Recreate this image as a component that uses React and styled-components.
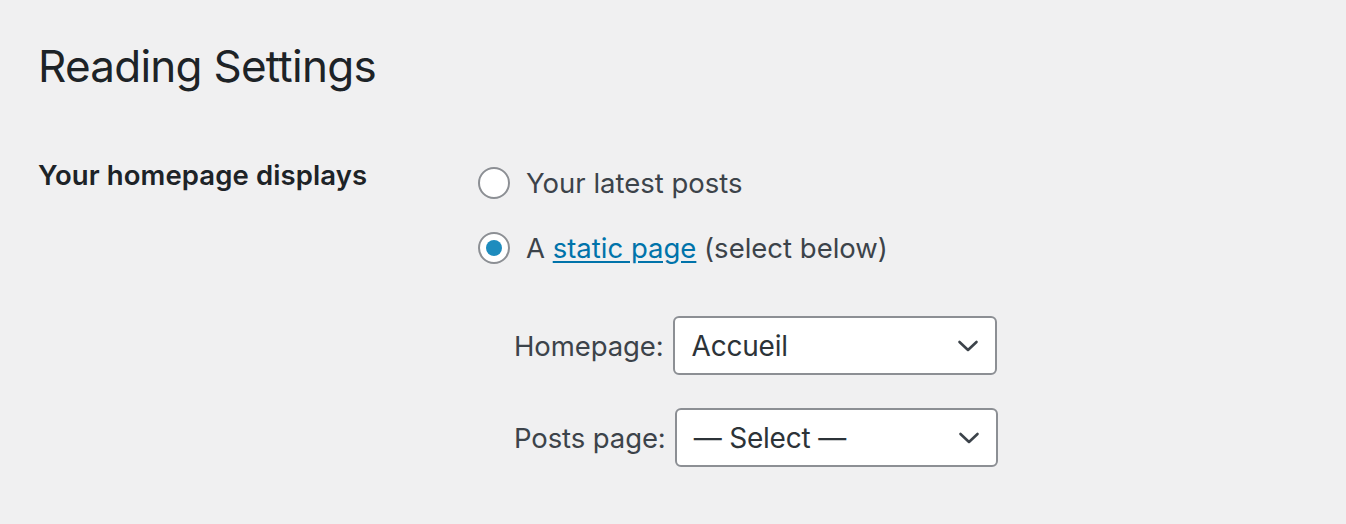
import React from 'react'
import styled, { createGlobalStyle } from 'styled-components'

const GlobalStyle = createGlobalStyle`
  body {
    margin: 0;
    background: #f0f0f1;
    font-family: Inter, "Noto Sans", sans-serif;
    color: #3c434a;
  }
`

const Page = styled.div`
  padding: 36px 38px 0 38px;
`

const Title = styled.h1`
  margin: 0 0 62px 0;
  font-size: 44px;
  font-weight: 400;
  line-height: 60px;
  color: #1d2327;
  letter-spacing: -0.75px;
`

const FormRow = styled.div`
  display: grid;
  grid-template-columns: 440px 1fr;
`

const RowLabel = styled.div`
  font-size: 27.5px;
  font-weight: 600;
  color: #1d2327;
  line-height: 34px;
  letter-spacing: 0.1px;
`

const Options = styled.div`
  display: flex;
  flex-direction: column;
  gap: 31px;
  margin-top: 8px;
`

const Option = styled.label`
  display: flex;
  align-items: center;
  gap: 16px;
  font-size: 27.5px;
  line-height: 34px;
  color: #3c434a;
  letter-spacing: 0;
`

const RadioCircle = styled.span`
  width: 28px;
  height: 28px;
  border: 2px solid #8c8f94;
  border-radius: 50%;
  background: #fff;
  display: flex;
  align-items: center;
  justify-content: center;
  flex-shrink: 0;

  &::after {
    content: "";
    width: 16px;
    height: 16px;
    border-radius: 50%;
    background: ${p => (p.$checked ? '#1e8cbe' : 'transparent')};
  }
`

const Link = styled.a`
  color: #0073aa;
  text-decoration: underline;
  text-underline-offset: 3px;
`

const SubFields = styled.div`
  display: flex;
  flex-direction: column;
  gap: 33px;
  padding-left: 36px;
  margin-top: 51px;
`

const Field = styled.div`
  display: flex;
  align-items: center;
  gap: 9px;
`

const FieldLabel = styled.span`
  font-size: 27.5px;
  color: #3c434a;
  letter-spacing: -0.1px;
`

const Select = styled.div`
  box-sizing: border-box;
  width: ${p => p.$width}px;
  height: 59px;
  border: 2px solid #8c8f94;
  border-radius: 6px;
  background: #fff;
  display: flex;
  align-items: center;
  justify-content: space-between;
  padding: 0 16px 0 17px;
  font-size: 28px;
  color: #2c3338;
  letter-spacing: -0.2px;
`

const Chevron = () => (
  <svg width="22" height="14" viewBox="0 0 22 14" fill="none">
    <path d="M2.5 3L11 11L19.5 3" stroke="#3c434a" strokeWidth="2.6" strokeLinecap="round" strokeLinejoin="round" />
  </svg>
)

export default function App() {
  return (
    <>
      <GlobalStyle />
      <Page>
        <Title>Reading Settings</Title>
        <FormRow>
          <RowLabel>Your homepage displays</RowLabel>
          <div>
            <Options>
              <Option>
                <RadioCircle />
                Your latest posts
              </Option>
              <Option>
                <RadioCircle $checked />
                <span>
                  A <Link>static page</Link> (select below)
                </span>
              </Option>
            </Options>
            <SubFields>
              <Field>
                <FieldLabel>Homepage:</FieldLabel>
                <Select $width={324}>
                  Accueil
                  <Chevron />
                </Select>
              </Field>
              <Field>
                <FieldLabel>Posts page:</FieldLabel>
                <Select $width={323}>
                  — Select —
                  <Chevron />
                </Select>
              </Field>
            </SubFields>
          </div>
        </FormRow>
      </Page>
    </>
  )
}
